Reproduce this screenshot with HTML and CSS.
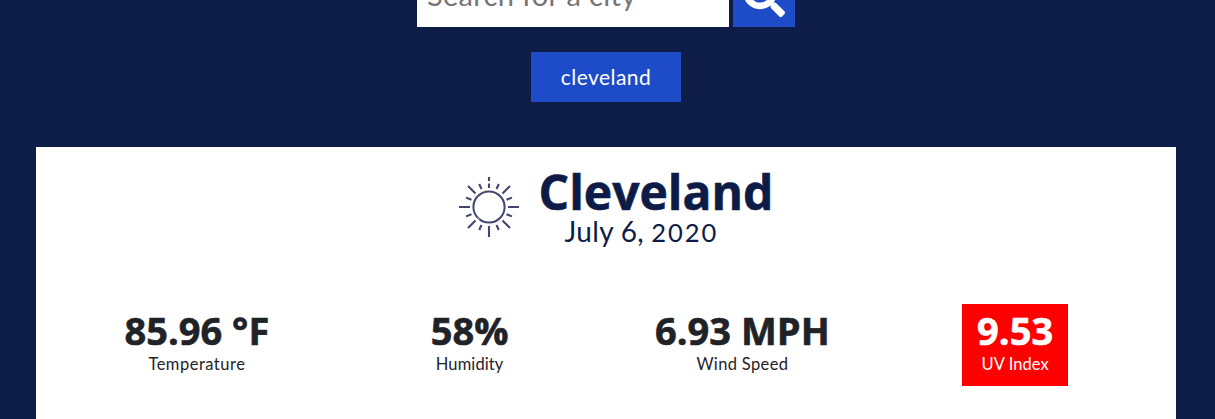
FILE: index.html
```html
<!DOCTYPE html>
<html lang="en">
<head>
<meta charset="utf-8">
<title>Weather Dashboard</title>
<link rel="stylesheet" href="styles.css">
</head>
<body>
<header class="top">
  <form class="search">
    <input class="search-input" type="text" placeholder="Search for a city">
    <button class="search-button" type="button" aria-label="Search">
      <svg class="search-icon" viewBox="0 0 512 512"><path fill="currentColor" d="M505 442.7L405.3 343c-4.5-4.5-10.6-7-17-7H372c27.6-35.3 44-79.7 44-128C416 93.1 322.9 0 208 0S0 93.1 0 208s93.1 208 208 208c48.3 0 92.7-16.4 128-44v16.3c0 6.4 2.5 12.5 7 17l99.7 99.7c9.4 9.4 24.6 9.4 33.9 0l28.3-28.3c9.4-9.4 9.4-24.6.1-34zM208 336c-70.7 0-128-57.2-128-128 0-70.7 57.2-128 128-128 70.7 0 128 57.2 128 128 0 70.7-57.2 128-128 128z"/></svg>
    </button>
  </form>
  <button class="history" type="button">cleveland</button>
</header>
<main class="card">
  <section class="heading">
    <svg class="sun" viewBox="0 0 60 60" fill="none" stroke="currentColor">
      <circle cx="30" cy="30" r="15.6" stroke-width="2"/>
      <g stroke-width="2.1">
        <path d="M30 0v4M30 6.5v4.5M30 49v11M0 30h11M49 30h11"/>
        <path d="M9 9l7.5 7.5M51 9l-7.5 7.5M9 51l7.5-7.5M51 51l-7.5-7.5"/>
        <path d="M20.2 7l2.3 5M39.8 7l-2.3 5M20.2 53l2.3-5M39.8 53l-2.3-5M7 20.6l5.5 2.2M53 20.6l-5.5 2.2M7 39.4l5.5-2.2M53 39.4l-5.5-2.2"/>
      </g>
      <path d="M18.2 40.7l2 2" stroke="#fff" stroke-width="1"/>
    </svg>
    <div class="place">
      <h1 class="city">Cleveland</h1>
      <p class="date">July 6, <span class="year">2020</span></p>
    </div>
  </section>
  <section class="stats">
    <div class="stat"><div class="box"><h2 class="value">85.96 °F</h2><p class="label temperature">Temperature</p></div></div>
    <div class="stat"><div class="box"><h2 class="value">58%</h2><p class="label humidity">Humidity</p></div></div>
    <div class="stat"><div class="box"><h2 class="value">6.93 MPH</h2><p class="label wind">Wind Speed</p></div></div>
    <div class="stat"><div class="box severe"><h2 class="value">9.53</h2><p class="label uv">UV Index</p></div></div>
  </section>
</main>
</body>
</html>
```
FILE: styles.css
```css
* { box-sizing: border-box; }
html { overflow: hidden; }
body {
  display: flow-root;
  margin: 0;
  height: 419px;
  overflow: hidden;
  background: #0e1d47;
  font-family: Lato, sans-serif;
}
h1, h2, p { margin: 0; }
.top {
  display: flex;
  flex-direction: column;
  align-items: center;
  width: 1212px;
  margin-top: -35px;
}
.search { display: flex; gap: 4px; }
.search-input {
  width: 312px;
  height: 62px;
  padding: 0 10px 3px;
  border: 0;
  border-radius: 0;
  background: #fff;
  font: 29px Lato, sans-serif;
  letter-spacing: 0.3px;
}
.search-input::placeholder { color: #757575; opacity: 1; }
.search-button {
  width: 62px;
  height: 62px;
  padding: 10px;
  border: 0;
  background: #1e4bc8;
  color: #fff;
}
.search-icon { display: block; width: 42px; height: 42px; }
.history {
  width: 150px;
  height: 50px;
  margin-top: 25px;
  padding: 0 0 2px;
  border: 0;
  background: #1e4bc8;
  color: #fff;
  font: 21px Lato, sans-serif;
  letter-spacing: 0.45px;
}
.card {
  width: 1140px;
  height: 272px;
  margin: 45px 0 0 36px;
  padding: 21px 24.5px 0;
  background: #fff;
}
.heading {
  display: flex;
  justify-content: center;
  gap: 20px;
  height: 136px;
  padding-left: 20px;
  color: #0d1c47;
}
.sun { width: 60px; height: 60px; margin-top: 9px; color: #42466e; }
.city {
  font: bold 48px/48px "Open Sans", sans-serif;
  -webkit-text-stroke: 0.6px currentColor;
}
.date {
  font-size: 28px;
  line-height: 34px;
  margin-top: -2px;
  padding-left: 26px;
  letter-spacing: 0.3px;
  white-space: nowrap;
}
.year { font-size: 25.5px; letter-spacing: 1.9px; }
.stats { display: grid; grid-template-columns: repeat(4, 1fr); color: #1f2328; }
.stat { display: flex; justify-content: center; }
.box { height: 82px; padding: 4px 15px; text-align: center; }
.severe { background: #f00; color: #fff; }
.value {
  font: bold 38px/45px "Open Sans", sans-serif;
  white-space: nowrap;
  -webkit-text-stroke: 0.6px currentColor;
}
.label { font-size: 16.5px; line-height: 22px; }
.temperature { letter-spacing: 0.5px; }
.humidity { letter-spacing: 0.1px; }
.wind { letter-spacing: 0.35px; }
.uv { letter-spacing: 0.05px; }
```
